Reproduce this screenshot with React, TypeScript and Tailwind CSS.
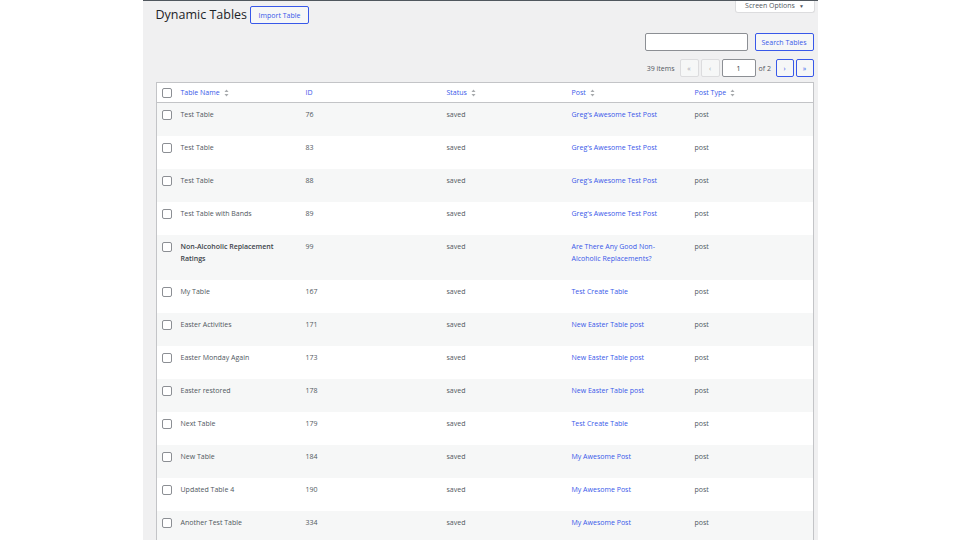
import React from "react";

const rows: { name: string; id: string; post: React.ReactNode; tall?: boolean; bold?: boolean }[] = [
  { name: "Test Table", id: "76", post: "Greg's Awesome Test Post" },
  { name: "Test Table", id: "83", post: "Greg's Awesome Test Post" },
  { name: "Test Table", id: "88", post: "Greg's Awesome Test Post" },
  { name: "Test Table with Bands", id: "89", post: "Greg's Awesome Test Post" },
  {
    name: "Non-Alcoholic Replacement Ratings",
    id: "99",
    post: (
      <>
        Are There Any Good Non-
        <br />
        Alcoholic Replacements?
      </>
    ),
    tall: true,
    bold: true,
  },
  { name: "My Table", id: "167", post: "Test Create Table" },
  { name: "Easter Activities", id: "171", post: "New Easter Table post" },
  { name: "Easter Monday Again", id: "173", post: "New Easter Table post" },
  { name: "Easter restored", id: "178", post: "New Easter Table post" },
  { name: "Next Table", id: "179", post: "Test Create Table" },
  { name: "New Table", id: "184", post: "My Awesome Post" },
  { name: "Updated Table 4", id: "190", post: "My Awesome Post" },
  { name: "Another Test Table", id: "334", post: "My Awesome Post" },
];

function SortIcon() {
  return (
    <svg width="5" height="8" viewBox="0 0 5 8" className="ml-[4px]">
      <path d="M2.5 0.5 L4.5 3 L0.5 3 Z" fill="#a7aaad" />
      <path d="M2.5 7.5 L4.5 5 L0.5 5 Z" fill="#a7aaad" />
    </svg>
  );
}

function Checkbox() {
  return <div className="w-[10px] h-[10px] border border-[#8c8f94] rounded-[2px] bg-white" />;
}

const grid = "grid grid-cols-[19px_125px_141px_125px_123px_1fr]";

export default function App() {
  return (
    <div
      className="w-[960px] h-[540px] bg-white overflow-hidden"
      style={{ fontFamily: '"Open Sans", "Noto Sans", sans-serif' }}
    >
      <div className="relative w-[675px] h-[540px] mx-auto bg-[#f0f0f1] border-t border-[#50575e] pl-[13px] pr-[4px] overflow-hidden">
        {/* Screen options tab */}
        <div className="absolute right-[3px] top-0 w-[80px] h-[12px] bg-white border border-t-0 border-[#dcdcde] rounded-b-[3px] flex items-start justify-center pt-[1px] text-[7px] text-[#50575e] leading-[8px]">
          Screen Options
          <span className="ml-[4px] text-[5px]">▼</span>
        </div>

        {/* Title */}
        <div className="flex items-center h-[18px] mt-[5px]">
          <h1 className="text-[12.5px] leading-none text-[#1d2327]">Dynamic Tables</h1>
          <button className="ml-[3px] h-[18px] w-[59px] border border-[#3858e9] rounded-[2px] bg-[#f6f7f7] text-[7px] text-[#3858e9] leading-none">
            Import Table
          </button>
        </div>

        {/* Search */}
        <div className="flex justify-end items-center mt-[9px] gap-[7px]">
          <div className="w-[103px] h-[18px] bg-white border border-[#8c8f94] rounded-[2px]" />
          <button className="w-[59px] h-[18px] border border-[#3858e9] rounded-[2px] bg-[#f6f7f7] text-[7px] text-[#3858e9] leading-none">
            Search Tables
          </button>
        </div>

        {/* Pagination */}
        <div className="flex justify-end items-center mt-[8px] h-[18px] text-[7px] text-[#50575e] leading-none">
          <span className="mr-[5px]">39 items</span>
          <div className="w-[19px] h-[18px] border border-[#dcdcde] bg-[#f6f7f7] rounded-[2px] flex items-center justify-center text-[#a7aaad]">
            «
          </div>
          <div className="ml-[2px] w-[19px] h-[18px] border border-[#dcdcde] bg-[#f6f7f7] rounded-[2px] flex items-center justify-center text-[#a7aaad]">
            ‹
          </div>
          <div className="ml-[2px] w-[34px] h-[18px] border border-[#8c8f94] bg-white rounded-[2px] flex items-center justify-center text-[#2c3338]">
            1
          </div>
          <span className="ml-[3px] mr-[2px] w-[15px]">of 2</span>
          <div className="w-[18px] h-[18px] border border-[#3858e9] bg-[#f6f7f7] rounded-[2px] flex items-center justify-center text-[#3858e9]">
            ›
          </div>
          <div className="ml-[2px] w-[18px] h-[18px] border border-[#3858e9] bg-[#f6f7f7] rounded-[2px] flex items-center justify-center text-[#3858e9]">
            »
          </div>
        </div>

        {/* Table */}
        <div className="mt-[5px] border border-[#c3c4c7] bg-white">
          <div className={`${grid} h-[20px] items-center border-b border-[#c3c4c7] text-[7px] text-[#3858e9] leading-none`}>
            <div className="pl-[5px]">
              <Checkbox />
            </div>
            <div className="pl-[5px] flex items-center">
              Table Name
              <SortIcon />
            </div>
            <div className="pl-[5px]">ID</div>
            <div className="pl-[5px] flex items-center">
              Status
              <SortIcon />
            </div>
            <div className="pl-[5px] flex items-center">
              Post
              <SortIcon />
            </div>
            <div className="pl-[5px] flex items-center">
              Post Type
              <SortIcon />
            </div>
          </div>
          {rows.map((r, i) => (
            <div
              key={i}
              className={`${grid} pt-[6px] ${r.tall ? "h-[45px]" : "h-[33px]"} ${
                i % 2 === 0 ? "bg-[#f6f7f7]" : "bg-white"
              } text-[7px] leading-[12px] text-[#50575e]`}
            >
              <div className="pl-[5px] pt-[1px]">
                <Checkbox />
              </div>
              <div className={`pl-[5px] pr-[8px] ${r.bold ? "font-semibold text-[#3c434a]" : ""}`}>
                {r.tall ? (
                  <>
                    Non-Alcoholic Replacement
                    <br />
                    Ratings
                  </>
                ) : (
                  r.name
                )}
              </div>
              <div className="pl-[5px]">{r.id}</div>
              <div className="pl-[5px]">saved</div>
              <div className="pl-[5px] text-[#3858e9]">{r.post}</div>
              <div className="pl-[5px]">post</div>
            </div>
          ))}
        </div>
      </div>
    </div>
  );
}
